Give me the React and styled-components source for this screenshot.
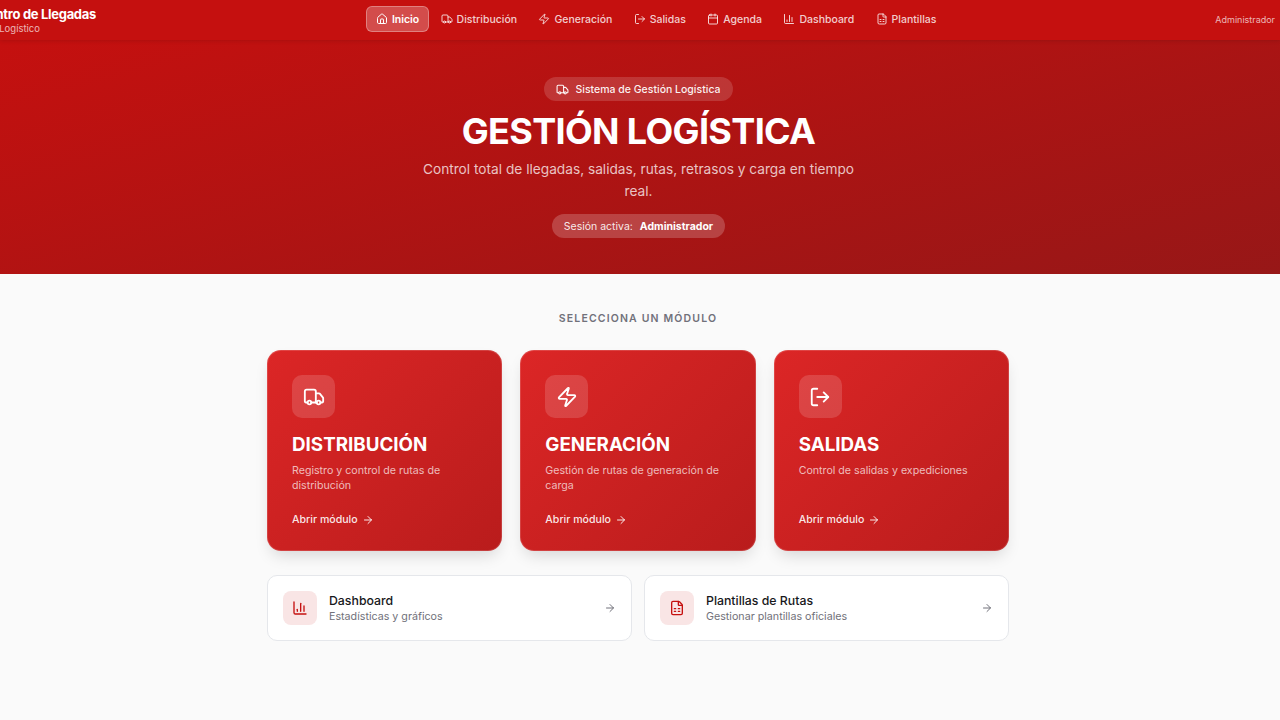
import React from 'react';
import styled, { createGlobalStyle } from 'styled-components';
import { House, Truck, Zap, LogOut, Calendar, ChartColumn, FileSpreadsheet, ArrowRight } from 'lucide-react';

const navItems = [
  { label: 'Inicio', icon: House, active: true },
  { label: 'Distribución', icon: Truck },
  { label: 'Generación', icon: Zap },
  { label: 'Salidas', icon: LogOut },
  { label: 'Agenda', icon: Calendar },
  { label: 'Dashboard', icon: ChartColumn },
  { label: 'Plantillas', icon: FileSpreadsheet },
];

const modules = [
  { title: 'DISTRIBUCIÓN', text: 'Registro y control de rutas de distribución', icon: Truck },
  { title: 'GENERACIÓN', text: 'Gestión de rutas de generación de carga', icon: Zap },
  { title: 'SALIDAS', text: 'Control de salidas y expediciones', icon: LogOut },
];

const shortcuts = [
  { title: 'Dashboard', text: 'Estadísticas y gráficos', icon: ChartColumn },
  { title: 'Plantillas de Rutas', text: 'Gestionar plantillas oficiales', icon: FileSpreadsheet },
];

const App = () => (
  <>
    <GlobalStyle />
    <Header>
      <Brand>
        <BrandTitle>Centro de Llegadas</BrandTitle>
        <BrandSub>Sistema Logístico</BrandSub>
      </Brand>
      <Nav>
        {navItems.map(({ label, icon: Icon, active }) => (
          <NavLink key={label} $active={active}>
            <Icon size={12} strokeWidth={2} />
            {label}
          </NavLink>
        ))}
      </Nav>
      <UserName>Administrador</UserName>
    </Header>
    <Hero>
      <HeroBadge>
        <Truck size={13} strokeWidth={2} />
        Sistema de Gestión Logística
      </HeroBadge>
      <HeroTitle>GESTIÓN LOGÍSTICA</HeroTitle>
      <HeroText>Control total de llegadas, salidas, rutas, retrasos y carga en tiempo real.</HeroText>
      <SessionPill>
        Sesión activa: <strong>Administrador</strong>
      </SessionPill>
    </Hero>
    <Main>
      <SectionLabel>SELECCIONA UN MÓDULO</SectionLabel>
      <ModuleGrid>
        {modules.map(({ title, text, icon: Icon }) => (
          <ModuleCard key={title}>
            <ModuleIcon>
              <Icon size={22} strokeWidth={2} />
            </ModuleIcon>
            <ModuleTitle>{title}</ModuleTitle>
            <ModuleText>{text}</ModuleText>
            <ModuleLink>
              Abrir módulo <ArrowRight size={12} strokeWidth={2} />
            </ModuleLink>
          </ModuleCard>
        ))}
      </ModuleGrid>
      <ShortcutGrid>
        {shortcuts.map(({ title, text, icon: Icon }) => (
          <ShortcutCard key={title}>
            <ShortcutIcon>
              <Icon size={16} strokeWidth={2} />
            </ShortcutIcon>
            <ShortcutBody>
              <ShortcutTitle>{title}</ShortcutTitle>
              <ShortcutText>{text}</ShortcutText>
            </ShortcutBody>
            <ArrowRight size={12} strokeWidth={2} color='#71717a' />
          </ShortcutCard>
        ))}
      </ShortcutGrid>
    </Main>
  </>
);

const GlobalStyle = createGlobalStyle`
  html, body {
    margin: 0;
    padding: 0;
    height: 720px;
    overflow: hidden;
    background: #fafafa;
    font-family: Inter, "Liberation Sans", sans-serif;
  }
  * {
    box-sizing: border-box;
  }
`;

const Header = styled.header`
  height: 40px;
  background: #c5100f;
  display: flex;
  align-items: center;
  justify-content: space-between;
  padding: 0 5px 2px 0;
  position: relative;
  z-index: 1;
  box-shadow: 0 1px 4px rgba(0, 0, 0, 0.12);
`;

const Brand = styled.div`
  width: 96px;
  margin: 2px 1px 0 0;
  flex: none;
  display: flex;
  flex-direction: column;
  align-items: flex-end;
  white-space: nowrap;
  overflow: hidden;
`;

const BrandTitle = styled.div`
  color: #fff;
  font-size: 13px;
  font-weight: 700;
  line-height: 18px;
  letter-spacing: -0.3px;
  margin-top: -1px;
`;

const BrandSub = styled.div`
  color: rgba(255, 255, 255, 0.7);
  font-size: 9.5px;
  line-height: 12px;
  width: 100%;
  direction: rtl;
  padding-right: 56px;
`;

const Nav = styled.nav`
  display: flex;
  align-items: center;
  gap: 1.4px;
`;

const NavLink = styled.a`
  display: flex;
  align-items: center;
  gap: 4px;
  height: 26px;
  padding: 0 9px;
  border-radius: 6px;
  font-size: 10.5px;
  font-weight: ${(p) => (p.$active ? 600 : 500)};
  color: ${(p) => (p.$active ? '#fff' : 'rgba(255, 255, 255, 0.8)')};
  background: ${(p) => (p.$active ? 'rgba(255, 255, 255, 0.25)' : 'transparent')};
  border: 1px solid ${(p) => (p.$active ? 'rgba(255, 255, 255, 0.3)' : 'transparent')};
`;

const UserName = styled.div`
  color: rgba(255, 255, 255, 0.7);
  font-size: 9px;
`;

const Hero = styled.section`
  height: 234px;
  background: linear-gradient(165deg, #c5100f 0%, #971717 100%);
  display: flex;
  flex-direction: column;
  align-items: center;
  padding: 37px 3px 0 0;
  color: #fff;
`;

const HeroBadge = styled.div`
  display: flex;
  align-items: center;
  gap: 6px;
  height: 24px;
  padding: 0 12px;
  border-radius: 12px;
  background: rgba(255, 255, 255, 0.15);
  font-size: 10.5px;
  font-weight: 500;
  color: rgba(255, 255, 255, 0.95);
`;

const HeroTitle = styled.h1`
  margin: 7px 0 0;
  font-size: 36px;
  line-height: 46px;
  font-weight: 700;
  letter-spacing: -0.65px;
  color: #fff;
`;

const HeroText = styled.p`
  margin: 3.5px 0 0;
  width: 448px;
  text-align: center;
  font-size: 13.7px;
  line-height: 22px;
  color: rgba(255, 255, 255, 0.75);
`;

const SessionPill = styled.div`
  margin-top: 12.5px;
  height: 24px;
  padding: 0 11.5px;
  display: flex;
  align-items: center;
  gap: 4px;
  border-radius: 12px;
  background: rgba(255, 255, 255, 0.2);
  font-size: 10.5px;
  color: rgba(255, 255, 255, 0.9);
  white-space: pre;
  strong {
    font-weight: 700;
    color: #fff;
  }
`;

const Main = styled.main`
  width: 742px;
  margin: 0 0 0 267px;
  padding-top: 38px;
`;

const SectionLabel = styled.div`
  text-align: center;
  font-size: 10.5px;
  line-height: 14px;
  font-weight: 600;
  letter-spacing: 1.15px;
  color: #71717a;
`;

const ModuleGrid = styled.div`
  display: grid;
  grid-template-columns: repeat(3, 1fr);
  gap: 18px;
  margin-top: 24px;
`;

const ModuleCard = styled.article`
  height: 201px;
  border-radius: 14px;
  border: 1px solid rgba(255, 255, 255, 0.15);
  padding: 24px;
  display: flex;
  flex-direction: column;
  background: linear-gradient(135deg, #dc2626 0%, #b91c1c 100%) border-box;
  box-shadow: 0 8px 16px -4px rgba(0, 0, 0, 0.15);
  color: #fff;
`;

const ModuleIcon = styled.div`
  width: 43px;
  height: 43px;
  border-radius: 10px;
  background: rgba(255, 255, 255, 0.15);
  display: flex;
  align-items: center;
  justify-content: center;
`;

const ModuleTitle = styled.h2`
  margin: 15px 0 0;
  font-size: 18.8px;
  line-height: 24px;
  font-weight: 700;
`;

const ModuleText = styled.p`
  margin: 6px 0 0;
  height: 30px;
  font-size: 10.65px;
  line-height: 15px;
  color: rgba(255, 255, 255, 0.7);
`;

const ModuleLink = styled.div`
  margin-top: 20px;
  display: flex;
  align-items: center;
  gap: 4px;
  font-size: 10.6px;
  font-weight: 500;
  color: rgba(255, 255, 255, 0.9);
`;

const ShortcutGrid = styled.div`
  display: grid;
  grid-template-columns: repeat(2, 1fr);
  gap: 12px;
  margin-top: 24px;
`;

const ShortcutCard = styled.article`
  height: 66px;
  padding: 0 15px;
  display: flex;
  align-items: center;
  gap: 12px;
  background: #fff;
  border: 1px solid #e5e7eb;
  border-radius: 10px;
`;

const ShortcutIcon = styled.div`
  width: 34px;
  height: 34px;
  border-radius: 8px;
  background: #f9e5e5;
  color: #c5100f;
  display: flex;
  align-items: center;
  justify-content: center;
`;

const ShortcutBody = styled.div`
  flex: 1;
  padding-top: 1px;
`;

const ShortcutTitle = styled.div`
  font-size: 12.3px;
  line-height: 17px;
  font-weight: 500;
  color: #18181b;
`;

const ShortcutText = styled.div`
  font-size: 10.7px;
  line-height: 16px;
  color: #71717a;
`;

export default App;
